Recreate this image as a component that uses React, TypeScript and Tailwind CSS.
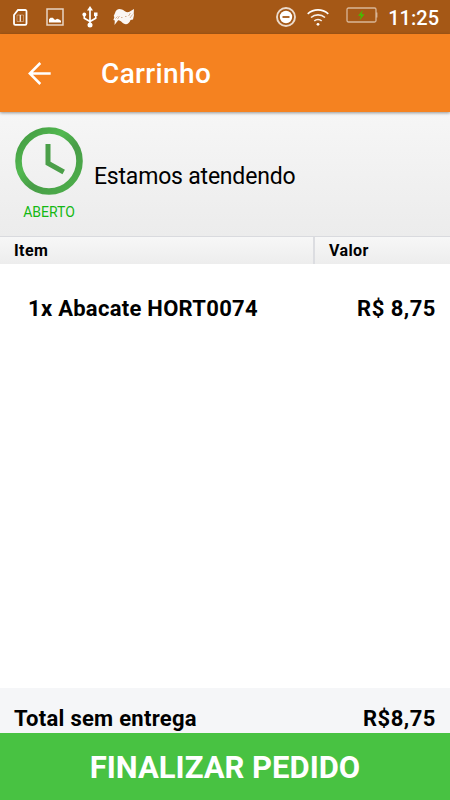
const items = [{ id: 'HORT0074', quantity: 1, name: 'Abacate', price: 'R$ 8,75' }];

function StatusBar() {
  return (
    <div className="flex h-[34px] shrink-0 items-center bg-[#a55816] pr-[11px] pl-[13px] text-white">
      <svg width="15" height="17" viewBox="0 0 15 17" fill="none" stroke="#fff" strokeWidth="1.8">
        <path d="M5 1h7.2a1.3 1.3 0 0 1 1.3 1.3v12.2a1.3 1.3 0 0 1-1.3 1.3H2.3A1.3 1.3 0 0 1 1 14.5V6z" />
        <path d="M4 12.5V6h6.5v6.5z" strokeWidth="1" opacity=".35" />
        <path d="M7.3 6v6.5" strokeWidth="1.3" opacity=".9" />
      </svg>
      <svg className="ml-[18px]" width="18" height="18" viewBox="0 0 18 18">
        <path d="M1 1h16v16H1z" fill="none" stroke="#fff" strokeWidth="1.5" opacity=".75" />
        <path d="M3 14.5v-3.3l1.5-1.5h2.3l2.2 2.3 2.2-1.3 2 .8 1.8 1.2v1.8z" fill="#fff" />
      </svg>
      <svg className="ml-[18px]" width="16" height="22" viewBox="0 0 16 22" fill="none" stroke="#fff" strokeWidth="1.7">
        <path d="M8 3v16M2.3 8v4.2L8 15.5l5.7-3.3V8" />
        <path d="m8 0 3 4.5H5z" fill="#fff" stroke="none" />
        <circle cx="8" cy="19" r="2.5" fill="#fff" stroke="none" />
        <circle cx="2.3" cy="8.5" r="1.9" fill="#fff" stroke="none" />
        <path d="M12 6.5h3.5V10H12z" fill="#fff" stroke="none" />
      </svg>
      <svg className="ml-[15px]" width="22" height="18" viewBox="0 0 22 18">
        <path d="M2 5C3 1 6 .2 9 1.4c2.6 1 4 3.4 7 2.6l5-3-.3 5 .3 1-1 4.5-2.5.5c-1 3.5-3.8 5-6.5 3.8-2.5-1.2-3.7-4-6-3.4L1.5 17l.3-4.5L.4 12l1-3-.7-1z" fill="#fff" opacity=".95" />
        <path d="m2.5 10.5 2-2M4.5 11l2-3M15.5 8l2-3M17 10l2.5-3.5M8 9.5h1.5M12 8.5h1.5" stroke="#a55816" strokeWidth=".7" opacity=".6" />
      </svg>
      <svg className="ml-auto" width="20" height="20" viewBox="0 0 20 20">
        <circle cx="10" cy="10" r="9" fill="none" stroke="#fff" strokeWidth="1.9" opacity=".78" />
        <circle cx="10" cy="10" r="6.2" fill="#fff" />
        <path d="M6.5 10h7" stroke="#a55816" strokeWidth="1.8" />
      </svg>
      <svg className="ml-[11px]" width="22" height="17" viewBox="0 0 22 17" fill="none" stroke="#fff" strokeWidth="1.6">
        <path d="M.7 4.8C6.8-.5 15.2-.5 21.3 4.8" />
        <path d="M4 8.5c4-3.5 10-3.5 14 0" opacity=".9" />
        <path d="M7.3 12c2-2 5.4-2 7.4 0" opacity=".9" />
        <circle cx="11" cy="15.3" r="1.4" fill="#fff" stroke="none" />
      </svg>
      <svg className="mb-1 ml-[17px]" width="32" height="16" viewBox="0 0 32 16">
        <rect x="1" y="1" width="29" height="14" rx="1.5" fill="none" stroke="#d9b698" strokeWidth="1.3" />
        <path d="M30.7 5.5v5" stroke="#d9b698" strokeWidth="1.4" />
        <path d="m17 2.7-5 6h3l-1.5 4.8 5-6.2h-3z" fill="#45bd00" />
      </svg>
      <span className="mt-px ml-[10px] text-[20px] leading-none font-medium">11:25</span>
    </div>
  );
}

function ClockIcon() {
  return (
    <svg width="68" height="68" viewBox="0 0 68 68" fill="none">
      <defs>
        <linearGradient id="ring" x1="10" y1="4" x2="62" y2="60" gradientUnits="userSpaceOnUse">
          <stop offset="0" stopColor="#459c43" />
          <stop offset=".35" stopColor="#52b950" />
          <stop offset=".6" stopColor="#489d47" />
          <stop offset="1" stopColor="#4cae4a" />
        </linearGradient>
      </defs>
      <circle cx="34" cy="34" r="30.5" stroke="url(#ring)" strokeWidth="6.6" />
      <path d="M33 17v19.3L48.7 45" stroke="#4b9f49" strokeWidth="5" />
    </svg>
  );
}

export default function App() {
  return (
    <div className="flex h-[800px] w-[450px] flex-col overflow-hidden bg-white font-[Roboto,sans-serif] text-black">
      <StatusBar />
      <header className="z-10 flex h-[78px] shrink-0 items-center bg-[#f58220] pl-[28px] text-white shadow-[0_1px_3px_rgba(0,0,0,0.4)]">
        <svg width="23" height="23" viewBox="0 0 23 23" fill="none" stroke="#fff" strokeWidth="2.5">
          <path d="M22.7 11.5H2M12.3 1 1.8 11.5 12.3 22" />
        </svg>
        <h1 className="mt-[2px] ml-[50px] text-[28px] leading-none font-medium tracking-[0.35px]">Carrinho</h1>
      </header>

      <section className="flex h-[124px] shrink-0 bg-linear-to-b from-[#f6f6f6] to-[#ececec] pt-[15px] pl-[15px]">
        <div className="flex w-[68px] flex-col items-center">
          <ClockIcon />
          <span className="mt-[10px] text-[14px] leading-[14px] text-[#14b814]">ABERTO</span>
        </div>
        <p className="mt-[35px] ml-[11px] text-[23px] leading-[30px] tracking-[-0.2px]">Estamos atendendo</p>
      </section>

      <div className="flex h-7 shrink-0 border-t border-[#d9dade] bg-linear-to-b from-[#f7f7f7] to-[#ededed] text-[16px] leading-[27px] font-bold tracking-[0.4px]">
        <div className="w-[313px] pl-[14px]">Item</div>
        <div className="flex-1 border-l-2 border-[#dcdde1] pl-[14px]">Valor</div>
      </div>

      <main className="flex-1 pt-[29px]">
        {items.map((item) => (
          <div key={item.id} className="flex justify-between pr-[14px] pl-[28px] text-[22px] leading-[32px] font-bold tracking-[0.28px]">
            <span>{item.quantity}x {item.name} {item.id}</span>
            <span className="tracking-[0.5px]">{item.price}</span>
          </div>
        ))}
      </main>

      <div className="flex h-[45px] shrink-0 justify-between bg-[#f5f6f8] px-[14px] pt-[16px] text-[22px] leading-[30px] font-bold tracking-[0.28px]">
        <span>Total sem entrega</span>
        <span className="tracking-[0.5px]">R$8,75</span>
      </div>
      <button className="h-[67px] shrink-0 bg-[#48c242] pt-[2px] text-[31px] leading-none font-bold text-white">
        FINALIZAR PEDIDO
      </button>
    </div>
  );
}
